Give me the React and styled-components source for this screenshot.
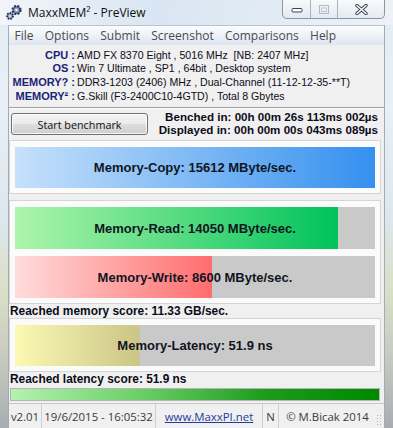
import React from "react"
import styled, { createGlobalStyle } from "styled-components"

const Global = createGlobalStyle`
  html, body {
    margin: 0;
    padding: 0;
    background: #dfe7ee;
  }
  body {
    width: 393px;
    height: 428px;
    overflow: hidden;
  }
`

const Window = styled.div`
  width: 393px;
  height: 428px;
  display: flex;
  flex-direction: column;
  background: linear-gradient(180deg, #e4ecf4 0%, #e8eff6 25%, #dde7ee 50%, #d9dfc6 68%, #c9ccc0 82%, #a9adb2 100%);
  font-family: "Liberation Sans", Arial, sans-serif;
  color: #000;
`

const TitleBar = styled.div`
  height: 25px;
  display: flex;
  align-items: center;
  padding-left: 5px;
  gap: 5px;
  position: relative;
  background: linear-gradient(90deg, rgba(255,255,255,0.5), rgba(205,222,240,0.5) 40%, rgba(255,255,255,0.3));
`

const Title = styled.span`
  font-family: "Open Sans", "Noto Sans", sans-serif;
  font-size: 12px;
  color: #101010;
`

const Caption = styled.div`
  position: absolute;
  top: 0;
  right: 8px;
  height: 18px;
  display: flex;
  border: 1px solid #8e959c;
  border-top: none;
  border-radius: 0 0 5px 5px;
  overflow: hidden;
  background: linear-gradient(180deg, rgba(255,255,255,0.7), rgba(225,232,240,0.7));
`

const CapBtn = styled.div`
  width: ${p => p.w}px;
  height: 100%;
  display: flex;
  align-items: center;
  justify-content: center;
  border-left: ${p => (p.first ? "none" : "1px solid #aab1b8")};
`

const Client = styled.div`
  flex: 1;
  margin: 0 8px;
  display: flex;
  flex-direction: column;
  background: #f0f0f0;
  border-left: 1px solid #a3acb4;
  border-right: 1px solid #a3acb4;
  min-height: 0;
`

const MenuBar = styled.div`
  height: 20px;
  display: flex;
  align-items: center;
  background: linear-gradient(180deg, #fbfcfe 0%, #eef2f8 50%, #dde5f0 100%);
  border-top: 1px solid #b9c4d0;
  box-sizing: border-box;
`

const MenuItem = styled.span`
  font-family: "Open Sans", "Noto Sans", sans-serif;
  font-size: 12px;
  color: #4a4a4a;
  padding: 0 5.6px;
`

const Info = styled.div`
  height: 63px;
  box-sizing: border-box;
  padding-top: 3px;
  border-bottom: 1px solid #a0a0a0;
  box-shadow: 0 1px 0 #fff;
  display: grid;
  grid-template-columns: 66px 1fr;
  grid-auto-rows: 13.6px;
  column-gap: 2px;
  align-items: center;
`

const Label = styled.span`
  font-size: 11px;
  font-weight: 700;
  color: #1a2476;
  text-align: right;
  white-space: nowrap;
`

const Value = styled.span`
  font-size: 10.6px;
  color: #0c0c18;
  white-space: pre;
`

const ButtonRow = styled.div`
  height: 32px;
  box-sizing: border-box;
  display: flex;
  justify-content: space-between;
  align-items: flex-start;
  padding: 5px 6px 0 2px;
`

const Button = styled.div`
  width: 137px;
  height: 22px;
  box-sizing: border-box;
  border: 1px solid #707070;
  border-radius: 3px;
  background: linear-gradient(180deg, #f4f4f4 0%, #ebebeb 48%, #dddddd 52%, #cfcfcf 100%);
  box-shadow: inset 0 0 0 1px rgba(255,255,255,0.8);
  display: flex;
  align-items: center;
  justify-content: center;
  font-family: "Open Sans", "Noto Sans", sans-serif;
  font-size: 10.8px;
  color: #111;
`

const Timing = styled.div`
  margin-top: -3px;
  display: flex;
  flex-direction: column;
  align-items: flex-end;
  font-size: 11.6px;
  font-weight: 700;
  line-height: 13px;
  color: #0c0c18;
`

const Panel = styled.div`
  margin: ${p => p.top || 0}px 3px 0 0;
  border: 1px solid #d5d5d5;
  background: #fbfbfb;
  padding: 6px 5px 5px 5px;
  display: flex;
  flex-direction: column;
  gap: ${p => p.gap || 0}px;
`

const Bar = styled.div`
  height: ${p => p.h}px;
  display: flex;
  align-items: center;
  justify-content: center;
  font-size: 13px;
  font-weight: 700;
  color: #111522;
  background: linear-gradient(90deg, ${p => p.from}, ${p => p.to}) 0 0 / ${p => p.pct}% 100% no-repeat, #c9c9c9;
`

const Score = styled.div`
  height: 14px;
  line-height: 15px;
  padding-left: 1px;
  font-size: 11.9px;
  font-weight: 700;
  color: #0c0c18;
`

const Progress = styled.div`
  margin: 2px 4px 0 1px;
  height: 13px;
  box-sizing: border-box;
  border: 1px solid #b4b4b4;
  background: linear-gradient(90deg, #b4f2b0 0%, #6ccf68 35%, #1c9a1c 70%, #008800 100%);
`

const StatusBar = styled.div`
  margin-top: 2px;
  flex: 1;
  display: flex;
  align-items: center;
  border-top: 1px solid #c9c9c9;
  font-family: "Open Sans", "Noto Sans", sans-serif;
  font-size: 11.4px;
  color: #3a3a3a;
`

const Cell = styled.div`
  width: ${p => p.w}px;
  height: 100%;
  display: flex;
  align-items: center;
  justify-content: center;
  border-right: ${p => (p.last ? "none" : "1px solid #cfcfcf")};
  box-sizing: border-box;
  white-space: nowrap;
`

const Link = styled.span`
  color: #1e3c9c;
  text-decoration: underline;
`

const Grip = styled.div`
  flex: 1;
  align-self: flex-end;
  height: 12px;
  background: radial-gradient(circle, #b8b8b8 0.8px, transparent 1px) 0 0 / 3px 3px;
  margin: 0 2px 2px 0;
`

const GearIcon = () => (
  <svg width="18" height="17" viewBox="0 0 18 17">
    <circle cx="11.5" cy="6" r="4" fill="#5d6f95" stroke="#26324e" strokeWidth="2.2" strokeDasharray="1.8 1.4" />
    <circle cx="11.5" cy="6" r="2.6" fill="#8ea3c9" />
    <circle cx="11.5" cy="6" r="1.1" fill="#fff" />
    <circle cx="5" cy="12" r="3" fill="#5d6f95" stroke="#26324e" strokeWidth="1.8" strokeDasharray="1.5 1.2" />
    <circle cx="5" cy="12" r="1.9" fill="#a7b6d6" />
    <circle cx="5" cy="12" r="0.8" fill="#fff" />
  </svg>
)

const MinIcon = () => (
  <svg width="12" height="8" viewBox="0 0 12 8">
    <rect x="1" y="3.5" width="10" height="3.5" rx="1" fill="#fff" stroke="#3c4450" strokeWidth="1" />
  </svg>
)

const MaxIcon = () => (
  <svg width="12" height="11" viewBox="0 0 12 11">
    <rect x="1.5" y="1.5" width="9" height="8" fill="none" stroke="#b4bac2" strokeWidth="1" />
    <rect x="3.5" y="4" width="5" height="3.5" fill="none" stroke="#c2c8cf" strokeWidth="1" />
  </svg>
)

const CloseIcon = () => (
  <svg width="13" height="11" viewBox="0 0 13 11">
    <path d="M2 1.5 L11 9.5 M11 1.5 L2 9.5" stroke="#3e4652" strokeWidth="3.4" strokeLinecap="round" />
    <path d="M2 1.5 L11 9.5 M11 1.5 L2 9.5" stroke="#f4f6f8" strokeWidth="1.6" strokeLinecap="round" />
  </svg>
)

const system = [
  ["CPU :", "AMD FX 8370 Eight , 5016 MHz  [NB: 2407 MHz]"],
  ["OS :", "Win 7 Ultimate , SP1 , 64bit , Desktop system"],
  ["MEMORY? :", "DDR3-1203 (2406) MHz , Dual-Channel (11-12-12-35-**T)"],
  ["MEMORY² :", "G.Skill (F3-2400C10-4GTD) , Total 8 Gbytes"],
]

const menu = ["File", "Options", "Submit", "Screenshot", "Comparisons", "Help"]

const App = () => (
  <Window>
    <Global />
    <TitleBar>
      <GearIcon />
      <Title>MaxxMEM² - PreView</Title>
      <Caption>
        <CapBtn w={27} first>
          <MinIcon />
        </CapBtn>
        <CapBtn w={26}>
          <MaxIcon />
        </CapBtn>
        <CapBtn w={46}>
          <CloseIcon />
        </CapBtn>
      </Caption>
    </TitleBar>
    <Client>
      <MenuBar>
        {menu.map(m => (
          <MenuItem key={m}>{m}</MenuItem>
        ))}
      </MenuBar>
      <Info>
        {system.map(([k, v]) => (
          <React.Fragment key={k}>
            <Label>{k}</Label>
            <Value>{v}</Value>
          </React.Fragment>
        ))}
      </Info>
      <ButtonRow>
        <Button>Start benchmark</Button>
        <Timing>
          <span>Benched in: 00h 00m 26s 113ms 002µs</span>
          <span>Displayed in: 00h 00m 00s 043ms 089µs</span>
        </Timing>
      </ButtonRow>
      <Panel>
        <Bar h={41} pct={100} from="#c6e1fb" to="#3590ef">
          Memory-Copy: 15612 MByte/sec.
        </Bar>
      </Panel>
      <Panel top={6} gap={7}>
        <Bar h={42} pct={89.8} from="#aef5ab" to="#00c35a">
          Memory-Read: 14050 MByte/sec.
        </Bar>
        <Bar h={42} pct={54.8} from="#ffdcdc" to="#ff6d6d">
          Memory-Write: 8600 MByte/sec.
        </Bar>
      </Panel>
      <Score>Reached memory score: 11.33 GB/sec.</Score>
      <Panel>
        <Bar h={41} pct={34.6} from="#fbf9b4" to="#cbc586">
          Memory-Latency: 51.9 ns
        </Bar>
      </Panel>
      <Score>Reached latency score: 51.9 ns</Score>
      <Progress />
      <StatusBar>
        <Cell w={33}>v2.01</Cell>
        <Cell w={114}>19/6/2015 - 16:05:32</Cell>
        <Cell w={107}>
          <Link>www.MaxxPI.net</Link>
        </Cell>
        <Cell w={16}>N</Cell>
        <Cell w={97} last>© M.Bicak 2014</Cell>
        <Grip />
      </StatusBar>
    </Client>
  </Window>
)

export default App
